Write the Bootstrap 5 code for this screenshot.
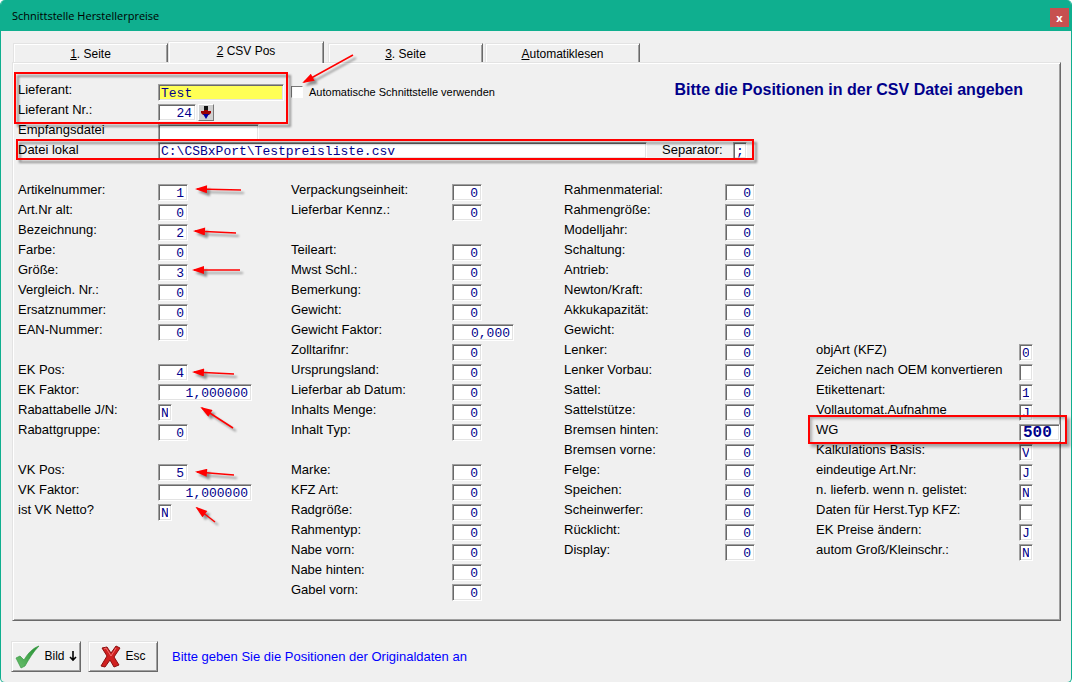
<!DOCTYPE html>
<html lang="de">
<head>
<meta charset="utf-8">
<meta name="viewport" content="width=device-width, initial-scale=1">
<title>Schnittstelle Herstellerpreise</title>
<link href="https://cdn.jsdelivr.net/npm/bootstrap@5.3.0/dist/css/bootstrap.min.css" rel="stylesheet">
<style>
  body { font: 13px/17px "Liberation Sans", Arial, sans-serif; color: #000; background: #fff; }
  .app-window { min-height: 100vh; background: #f0f0f0; border: 1px solid #0faf8f; border-top: 0; border-radius: 5px; overflow: hidden; }
  .title-bar { height: 31px; background: #0faf8f; padding-left: 11px; font: 11px/18px "Open Sans", sans-serif; }
  .title-bar h1 { font: inherit; }
  .close-btn { width: 19px; height: 19px; margin: 8px 2px 0 0; border: 0; padding: 0; background: #c75050; color: #fff; font: bold 11px/16px "Open Sans", sans-serif; }
  .work-area { padding: 10px; }
  .tab-strip { height: 21px; padding-left: 2px; position: relative; z-index: 1; }
  .tab-btn { width: 155px; height: 19px; border: 1px solid; border-color: #e3e3e3 #696969 #e3e3e3 #e3e3e3; border-bottom: 0; box-shadow: inset 1px 1px #fff, inset -1px 0 #a0a0a0; background: #f0f0f0; padding: 2px 0 0; font-size: 12px; line-height: 15px; color: #000; }
  .tab-btn.active { width: 156px; height: 22px; margin-bottom: -1px; padding: 0 0 2px; }
  .tab-gap { margin-left: 4px; }
  .tab-btn + .tab-last { margin-left: 2px; }
  .panel { border: 1px solid; border-color: #e3e3e3 #696969 #696969 #e3e3e3; box-shadow: inset 1px 1px #fff, inset -1px -1px #a0a0a0; padding: 18px 1px 19px 5px; margin: 0 0 0 1px; }
  .form-line { display: flex; align-items: flex-start; height: 20px; position: relative; }
  .form-line label { white-space: nowrap; flex: none; }
  .gap-line { margin-top: 20px; }
  .c1 label { width: 140px; } .c2 label, .c3 label { width: 161px; } .c4 label { width: 203px; }
  .c4 { padding-top: 160px; }
  .fieldbox { height: 17px; margin-top: 3px; flex: none; border: 1px solid; border-color: #a0a0a0 #fff #fff #a0a0a0; border-radius: 0; background: #fff; box-shadow: inset 1px 1px #696969, inset -1px -1px #e3e3e3; padding: 1px 3px 0 2px; color: #00008b; font: 13px/14px "Liberation Mono", monospace; outline: 0; }
  .w1 { width: 14px; } .w3 { width: 30px; text-align: right; } .w4 { width: 38px; text-align: right; }
  .w5 { width: 62px; text-align: right; } .w9 { width: 94px; text-align: right; } .w10 { width: 101px; } .w12 { width: 126px; }
  .wpath { width: 489px; }
  .file-line .fieldbox { margin-top: 1px; }
  .w-wg { width: 41px; font-size: 16px; font-weight: bold; padding-left: 3px; }
  .focus-field { background: #ffff55; }
  .pick-btn { width: 16px; height: 17px; margin: 3px 0 0 2px; padding: 0; border: 1px solid; border-color: #fff #777 #777 #fff; background: #d0d0d0; display: flex; align-items: center; justify-content: center; }
  .tick { appearance: none; width: 12px; height: 12px; margin: 5px 6px 0 7px; border: 1px solid; border-color: #777 #fff #fff #777; background: #fff; }
  .form-line label.tick-label { width: auto; font-size: 11px; padding-top: 3px; }
  .form-line label.sep-label { width: 86px; padding-left: 15px; }
  .headline { font-size: 16px; line-height: 18px; font-weight: bold; color: #00008b; margin: 0 36px 0 auto; white-space: nowrap; }
  .field-grid { display: grid; grid-template-columns: minmax(0, 273fr) minmax(0, 273fr) minmax(0, 252fr) minmax(0, 243fr); margin-top: 20px; }
  .wg-line::after { content: ""; position: absolute; inset: -6px -8px -3px -8px; border: 2px solid #f00; box-shadow: 3px 3px 3px #0005, inset 2px 2px 3px #0004; pointer-events: none; z-index: 2; }
  .key-btn { width: 70px; height: 31px; padding: 0; border: 1px solid; border-color: #e3e3e3 #696969 #696969 #e3e3e3; background: #f0f0f0; box-shadow: inset 1px 1px #fff, inset -1px -1px #a0a0a0; font-size: 12px; color: #000; }
  .key-row { margin-top: 20px; gap: 7px; }
  .status { color: #00f; margin-left: 7px; }
  .notes { position: absolute; left: 0; top: 0; width: 100%; height: 620px; pointer-events: none; z-index: 3; filter: drop-shadow(3px 3px 1px #0006); }
</style>
</head>
<body>
<div class="app-window position-relative">
  <header class="title-bar d-flex justify-content-between">
    <h1 class="m-0 align-self-center">Schnittstelle Herstellerpreise</h1>
    <button class="close-btn" type="button" aria-label="Schließen">x</button>
  </header>
  <main class="work-area">
    <nav class="tab-strip d-flex align-items-end">
      <button class="tab-btn" type="button"><u>1</u>. Seite</button>
      <button class="tab-btn active" type="button"><u>2</u> CSV Pos</button>
      <button class="tab-btn tab-gap" type="button"><u>3</u>. Seite</button>
      <button class="tab-btn tab-last" type="button"><u>A</u>utomatiklesen</button>
    </nav>
    <form class="panel">
      <div class="c1">
        <div class="form-line"><label for="lief">Lieferant:</label><input id="lief" class="fieldbox w12 focus-field" value="Test">
          <input type="checkbox" class="tick" id="auto"><label class="tick-label" for="auto">Automatische Schnittstelle verwenden</label>
          <h2 class="headline">Bitte die Positionen in der CSV Datei angeben</h2></div>
        <div class="form-line"><label for="liefnr">Lieferant Nr.:</label><input id="liefnr" class="fieldbox w4" value="24">
          <button class="pick-btn" type="button" aria-label="Lieferant wählen"><svg width="10" height="13" viewBox="0 0 10 13"><path d="M3 0h4v4H3z" fill="#111"/><path d="M0 5h3V4h4v1h3v2L8 9H2L0 7z" fill="#900"/><path d="M2 8h6l-3 5z" fill="#0000a0"/></svg></button></div>
        <div class="form-line"><label for="empf">Empfangsdatei</label><input id="empf" class="fieldbox w10"></div>
        <div class="form-line file-line"><label for="datei">Datei lokal</label><input id="datei" class="fieldbox wpath" value="C:\CSBxPort\Testpreisliste.csv"><label class="sep-label" for="sep">Separator:</label><input id="sep" class="fieldbox w1" value=";"></div>
      </div>
      <div class="field-grid" id="grid"></div>
    </form>
    <footer class="key-row d-flex align-items-center">
      <button class="key-btn d-flex align-items-center justify-content-center" type="button">
        <svg width="25" height="24" viewBox="0 0 25 24"><defs><linearGradient id="gr" x1="0" y1="1" x2="1" y2="0"><stop offset="0" stop-color="#6cc070"/><stop offset="1" stop-color="#239030"/></linearGradient></defs><path d="M1 13l4-2 4 4C13 8 18 3 24 1c-6 6-10 13-14 20l-4 2z" fill="url(#gr)" stroke="#3a9a45" stroke-width=".7"/></svg>
        <span class="ms-1">Bild</span>
        <svg class="ms-1" width="8" height="11" viewBox="0 0 8 11"><path d="M4 0v9M1 6l3 3 3-3" fill="none" stroke="#000" stroke-width="1.6"/></svg>
      </button>
      <button class="key-btn d-flex align-items-center justify-content-center" type="button">
        <svg width="21" height="24" viewBox="0 0 21 24"><path d="M2 3l5-1 4 6 5-7 4 2-6 9 5 8-5 2-4-7-5 7-4-1 6-10z" fill="#d02020" stroke="#8a1010"/><path d="M4 4l2-1 5 8 5-8" fill="none" stroke="#f07070"/></svg>
        <span class="ms-1">Esc</span>
      </button>
      <span class="status">Bitte geben Sie die Positionen der Originaldaten an</span>
    </footer>
  </main>
  <svg class="notes" aria-hidden="true">
    <defs><marker id="tip" markerUnits="userSpaceOnUse" markerWidth="13" markerHeight="8" refX="2" refY="4" orient="auto"><path d="M0 4L12 0V8z" fill="#f00"/></marker></defs>
    <g fill="none" stroke="#f00" stroke-width="2">
      <path d="M14 73H286V123H14z"/>
      <path d="M16 140H752V159H16z"/>
      <g stroke-width="1.500" marker-start="url(#tip)">
        <path d="M303 82L352 55"/><path d="M196 189L240 190"/><path d="M194 231L235 233"/><path d="M193 270L239 270"/>
        <path d="M193 372L233 374"/><path d="M201 408L232 428"/><path d="M196 472L233 475"/><path d="M196 508L214 522"/>
      </g>
    </g>
  </svg>
</div>
<script src="https://cdn.jsdelivr.net/npm/bootstrap@5.3.0/dist/js/bootstrap.bundle.min.js"></script>
<script>
  // Each entry: label, value, field width class; null leaves one line free.
  const columns = [
    [['Artikelnummer:', '1'], ['Art.Nr alt:'], ['Bezeichnung:', '2'], ['Farbe:'], ['Größe:', '3'], ['Vergleich. Nr.:'], ['Ersatznummer:'], ['EAN-Nummer:'], null,
     ['EK Pos:', '4'], ['EK Faktor:', '1,000000', 'w9'], ['Rabattabelle J/N:', 'N', 'w1'], ['Rabattgruppe:'], null,
     ['VK Pos:', '5'], ['VK Faktor:', '1,000000', 'w9'], ['ist VK Netto?', 'N', 'w1']],
    [['Verpackungseinheit:'], ['Lieferbar Kennz.:'], null, ['Teileart:'], ['Mwst Schl.:'], ['Bemerkung:'], ['Gewicht:'], ['Gewicht Faktor:', '0,000', 'w5'], ['Zolltarifnr:'],
     ['Ursprungsland:'], ['Lieferbar ab Datum:'], ['Inhalts Menge:'], ['Inhalt Typ:'], null, ['Marke:'], ['KFZ Art:'], ['Radgröße:'], ['Rahmentyp:'], ['Nabe vorn:'], ['Nabe hinten:'], ['Gabel vorn:']],
    ['Rahmenmaterial:', 'Rahmengröße:', 'Modelljahr:', 'Schaltung:', 'Antrieb:', 'Newton/Kraft:', 'Akkukapazität:', 'Gewicht:', 'Lenker:', 'Lenker Vorbau:', 'Sattel:', 'Sattelstütze:',
     'Bremsen hinten:', 'Bremsen vorne:', 'Felge:', 'Speichen:', 'Scheinwerfer:', 'Rücklicht:', 'Display:'].map(t => [t]),
    [['objArt (KFZ)', '0', 'w1'], ['Zeichen nach OEM konvertieren', '', 'w1'], ['Etikettenart:', '1', 'w1'], ['Vollautomat.Aufnahme', 'J', 'w1'], ['WG', '500', 'w-wg'],
     ['Kalkulations Basis:', 'V', 'w1'], ['eindeutige Art.Nr:', 'J', 'w1'], ['n. lieferb. wenn n. gelistet:', 'N', 'w1'], ['Daten für Herst.Typ KFZ:', '', 'w1'],
     ['EK Preise ändern:', 'J', 'w1'], ['autom Groß/Kleinschr.:', 'N', 'w1']]
  ];
  document.getElementById('grid').innerHTML = columns.map((col, c) => {
    let gap = '';
    return `<div class="c${c + 1}">` + col.map((f, i) => {
      if (!f) { gap = ' gap-line'; return ''; }
      const [text, value = '0', width = 'w3'] = f, id = `f${c}-${i}`;
      const line = `<div class="form-line${gap}${text === 'WG' ? ' wg-line' : ''}"><label for="${id}">${text}</label><input id="${id}" class="fieldbox ${width}" value="${value}"></div>`;
      gap = '';
      return line;
    }).join('') + '</div>';
  }).join('');
  const first = document.getElementById('lief');
  first.focus();
  first.setSelectionRange(4, 4);
</script>
</body>
</html>
